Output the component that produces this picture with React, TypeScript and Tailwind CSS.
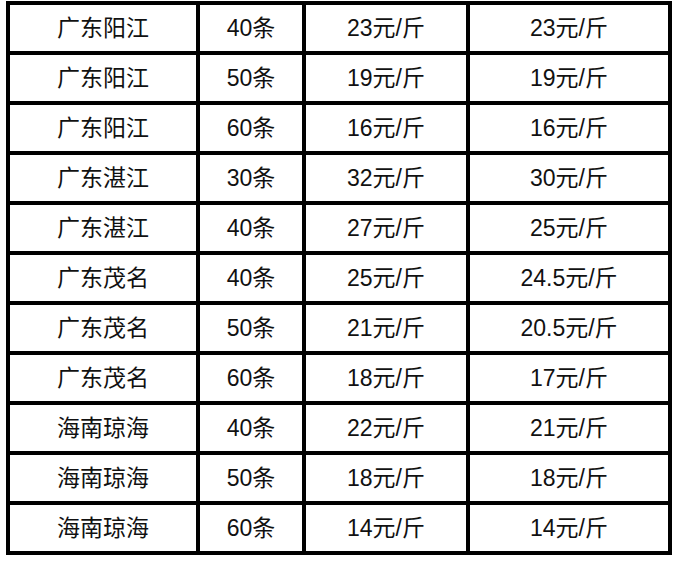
import React from "react";

const rows: [string, string, string, string][] = [
  ["广东阳江", "40条", "23元/斤", "23元/斤"],
  ["广东阳江", "50条", "19元/斤", "19元/斤"],
  ["广东阳江", "60条", "16元/斤", "16元/斤"],
  ["广东湛江", "30条", "32元/斤", "30元/斤"],
  ["广东湛江", "40条", "27元/斤", "25元/斤"],
  ["广东茂名", "40条", "25元/斤", "24.5元/斤"],
  ["广东茂名", "50条", "21元/斤", "20.5元/斤"],
  ["广东茂名", "60条", "18元/斤", "17元/斤"],
  ["海南琼海", "40条", "22元/斤", "21元/斤"],
  ["海南琼海", "50条", "18元/斤", "18元/斤"],
  ["海南琼海", "60条", "14元/斤", "14元/斤"],
];

export default function App() {
  return (
    <div className="w-[678px] h-[562px] bg-white pt-[1px] pl-[6px] overflow-hidden">
      <div
        className="w-[666px] bg-black p-[4px] grid grid-cols-[186px_102px_160px_198px] auto-rows-[46px] gap-[4px] text-[23px] text-[#111]"
        style={{ fontFamily: '"Liberation Sans", "Noto Sans CJK SC", sans-serif' }}
      >
        {rows.map((r, i) =>
          r.map((c, j) => (
            <div key={`${i}-${j}`} className="bg-white flex items-center justify-center leading-none">
              {c}
            </div>
          ))
        )}
      </div>
    </div>
  );
}
